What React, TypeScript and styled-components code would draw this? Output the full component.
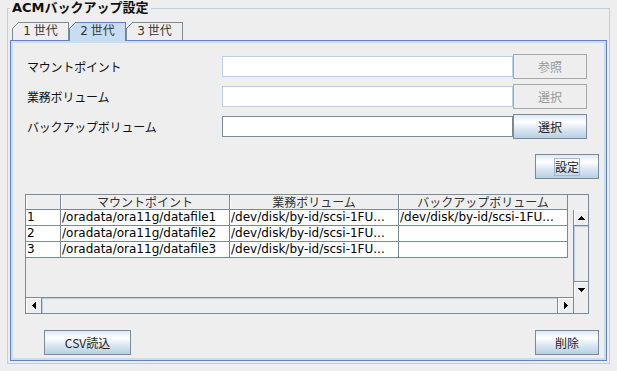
import styled, { createGlobalStyle } from 'styled-components';

const GlobalStyle = createGlobalStyle`
  html, body {
    margin: 0;
    padding: 0;
    background: #eeeeee;
  }
  body {
    font-family: 'DejaVu Sans', 'Noto Sans CJK JP', sans-serif;
    font-size: 12px;
    color: #000;
  }
  * {
    box-sizing: border-box;
  }
`;

const Window = styled.div`
  width: 617px;
  height: 371px;
  padding: 8px 0 0 7px;
  background: #eeeeee;
  overflow: hidden;
`;

const Group = styled.div`
  position: relative;
  width: 603px;
  height: 356px;
  border: 1px solid #b8cfe5;
  padding: 13px 2px 2px 2px;
  display: flex;
  flex-direction: column;
`;

const GroupTitle = styled.span`
  position: absolute;
  left: 2px;
  top: -9px;
  padding: 0 2px;
  background: #eeeeee;
  font-weight: bold;
  font-size: 13px;
  line-height: 16px;
  color: #111;
`;

const TabStrip = styled.div`
  display: flex;
  height: 18px;
  padding-left: 2px;
  position: relative;
  z-index: 1;
`;

const Tab = styled.div<{ $selected?: boolean }>`
  position: relative;
  width: 57px;
  height: 18px;
  border: 1px solid ${(p) => (p.$selected ? '#6382bf' : '#7a8a99')};
  border-bottom: none;
  background: ${(p) => (p.$selected ? '#c8ddf2' : '#eeeeee')};
  color: #333;
  font-family: 'DejaVu Sans', 'Noto Sans CJK JP', sans-serif;
  font-size: 12px;
  line-height: 17px;
  text-align: center;
  word-spacing: -1px;
  &::before {
    content: '';
    position: absolute;
    top: -1px;
    left: -1px;
    width: 7px;
    height: 7px;
    background: linear-gradient(
      to bottom right,
      #eeeeee 0 calc(50% - 0.6px),
      ${(p) => (p.$selected ? '#6382bf' : '#7a8a99')} calc(50% - 0.6px) calc(50% + 0.6px),
      transparent calc(50% + 0.6px)
    );
  }
  &::after {
    content: '';
    display: ${(p) => (p.$selected ? 'block' : 'none')};
    position: absolute;
    left: 0;
    right: 0;
    bottom: -1px;
    height: 1px;
    background: #c8ddf2;
  }
`;

const Panel = styled.div`
  flex: 1;
  border: 1px solid #6382bf;
  box-shadow: inset 0 0 0 2px #c8ddf2;
  padding: 2px;
  display: flex;
  flex-direction: column;
`;

const Form = styled.div`
  display: grid;
  grid-template-columns: 195px 291px 74px;
  grid-auto-rows: 25px;
  row-gap: 5px;
  align-items: center;
  margin: 11px 0 0 14px;
`;

const Label = styled.span`
  font-family: 'Noto Sans CJK JP', sans-serif;
  font-size: 12px;
  letter-spacing: -0.2px;
  color: #111;
`;

const Field = styled.input<{ $editable?: boolean }>`
  height: 21px;
  width: 100%;
  margin: 0;
  padding: 0 3px;
  border: 1px solid ${(p) => (p.$editable ? '#7a8a99' : '#b8cfe5')};
  background: #ffffff;
  font: 12px 'DejaVu Sans', sans-serif;
  outline: none;
`;

const Button = styled.button<{ $width?: number }>`
  width: ${(p) => (p.$width ? `${p.$width}px` : '100%')};
  height: 25px;
  margin: 0;
  padding: 0;
  border: 1px solid #7a8a99;
  background: linear-gradient(to bottom, #dde8f3 0%, #ffffff 30%, #dde8f3 60%, #b8cfe5 100%);
  color: #222;
  font-family: 'Noto Sans CJK JP', 'DejaVu Sans', sans-serif;
  font-size: 12px;
  line-height: 14px;
  display: flex;
  align-items: center;
  justify-content: center;
  &:disabled {
    border-color: #a8a8a8;
    background: #eeeeee;
    color: #999999;
  }
`;

const FocusText = styled.span`
  outline: 1px solid #a3b8cc;
  outline-offset: 0;
  padding: 1px 0;
`;

const SetRow = styled.div`
  display: flex;
  justify-content: flex-end;
  margin-top: 15px;
  padding-right: 5px;
`;

const ScrollPane = styled.div`
  margin: 15px 15px 0 12px;
  height: 120px;
  border: 1px solid #7a8a99;
  display: grid;
  grid-template-columns: 547px 15px;
  grid-template-rows: 15px 87px 16px;
  background: #eeeeee;
`;

const TableGrid = styled.div`
  display: grid;
  grid-template-columns: 35px 169px 169px 169px;
  grid-auto-rows: 16px;
  align-content: start;
`;

const HeaderGrid = styled(TableGrid)`
  grid-auto-rows: 15px;
`;

const HeadCell = styled.div`
  border-right: 1px solid #7a8a99;
  border-bottom: 1px solid #7a8a99;
  box-shadow: inset 1px 0 0 #ffffff;
  background: #eeeeee;
  font-family: 'Noto Sans CJK JP', sans-serif;
  font-size: 12px;
  line-height: 14px;
  text-align: center;
  color: #333;
  white-space: nowrap;
`;

const Cell = styled.div`
  border-right: 1px solid #7a8a99;
  border-bottom: 1px solid #7a8a99;
  background: #ffffff;
  padding-left: 1px;
  font-family: 'DejaVu Sans', sans-serif;
  font-size: 12px;
  line-height: 15px;
  white-space: nowrap;
  overflow: hidden;
`;

const VScroll = styled.div`
  border-left: 1px solid #7a8a99;
  display: flex;
  flex-direction: column;
`;

const HScroll = styled.div`
  border-top: 1px solid #7a8a99;
  display: flex;
`;

const Corner = styled.div<{ $line?: boolean }>`
  border-left: ${(p) => (p.$line ? '1px solid #7a8a99' : 'none')};
`;

const ArrowButton = styled.div<{ $edge: 'top' | 'bottom' | 'left' | 'right' }>`
  flex: none;
  ${(p) => (p.$edge === 'top' || p.$edge === 'bottom' ? 'height: 16px;' : 'width: 16px;')}
  border-${(p) => p.$edge}: 1px solid #7a8a99;
  box-shadow: inset 1px 1px 0 #ffffff;
  background: #eeeeee;
  display: flex;
  align-items: center;
  justify-content: center;
`;

const Track = styled.div`
  flex: 1;
  box-shadow: inset 1px 1px 0 #b8cfe5;
  background: #eeeeee;
`;

const BottomRow = styled.div`
  display: flex;
  justify-content: space-between;
  margin-top: 16px;
  padding: 0 5px 0 31px;
`;

type Dir = 'up' | 'down' | 'left' | 'right';

const arrowPaths: Record<Dir, string> = {
  up: 'M3 0h1v1H3z M2 1h3v1H2z M1 2h5v1H1z M0 3h7v1H0z',
  down: 'M0 0h7v1H0z M1 1h5v1H1z M2 2h3v1H2z M3 3h1v1H3z',
  left: 'M3 0h1v7H3z M2 1h1v5H2z M1 2h1v3H1z M0 3h1v1H0z',
  right: 'M0 0h1v7H0z M1 1h1v5H1z M2 2h1v3H2z M3 3h1v1H3z',
};

function Arrow({ dir }: { dir: Dir }) {
  const horiz = dir === 'left' || dir === 'right';
  const w = horiz ? 4 : 7;
  const h = horiz ? 7 : 4;
  return (
    <svg width={w} height={h} viewBox={`0 0 ${w} ${h}`} shapeRendering="crispEdges">
      <path d={arrowPaths[dir]} fill="#000" />
    </svg>
  );
}

const columns = ['', 'マウントポイント', '業務ボリューム', 'バックアップボリューム'];

const rows = [
  ['1', '/oradata/ora11g/datafile1', '/dev/disk/by-id/scsi-1FU...', '/dev/disk/by-id/scsi-1FU...'],
  ['2', '/oradata/ora11g/datafile2', '/dev/disk/by-id/scsi-1FU...', ''],
  ['3', '/oradata/ora11g/datafile3', '/dev/disk/by-id/scsi-1FU...', ''],
];

export default function App() {
  return (
    <>
      <GlobalStyle />
      <Window>
        <Group>
          <GroupTitle>ACMバックアップ設定</GroupTitle>
          <TabStrip>
            <Tab>1 世代</Tab>
            <Tab $selected>2 世代</Tab>
            <Tab>3 世代</Tab>
          </TabStrip>
          <Panel>
            <Form>
              <Label>マウントポイント</Label>
              <Field readOnly />
              <Button disabled>参照</Button>
              <Label>業務ボリューム</Label>
              <Field readOnly />
              <Button disabled>選択</Button>
              <Label>バックアップボリューム</Label>
              <Field $editable />
              <Button>選択</Button>
            </Form>
            <SetRow>
              <Button $width={64}>
                <FocusText>設定</FocusText>
              </Button>
            </SetRow>
            <ScrollPane>
              <HeaderGrid>
                {columns.map((c, i) => (
                  <HeadCell key={i}>{c}</HeadCell>
                ))}
              </HeaderGrid>
              <Corner />
              <TableGrid>
                {rows.map((r, ri) => r.map((v, ci) => <Cell key={`${ri}-${ci}`}>{v}</Cell>))}
              </TableGrid>
              <VScroll>
                <ArrowButton $edge="bottom">
                  <Arrow dir="up" />
                </ArrowButton>
                <Track />
                <ArrowButton $edge="top">
                  <Arrow dir="down" />
                </ArrowButton>
              </VScroll>
              <HScroll>
                <ArrowButton $edge="right">
                  <Arrow dir="left" />
                </ArrowButton>
                <Track />
                <ArrowButton $edge="left">
                  <Arrow dir="right" />
                </ArrowButton>
              </HScroll>
              <Corner $line />
            </ScrollPane>
            <BottomRow>
              <Button $width={87}>CSV読込</Button>
              <Button $width={64}>削除</Button>
            </BottomRow>
          </Panel>
        </Group>
      </Window>
    </>
  );
}
